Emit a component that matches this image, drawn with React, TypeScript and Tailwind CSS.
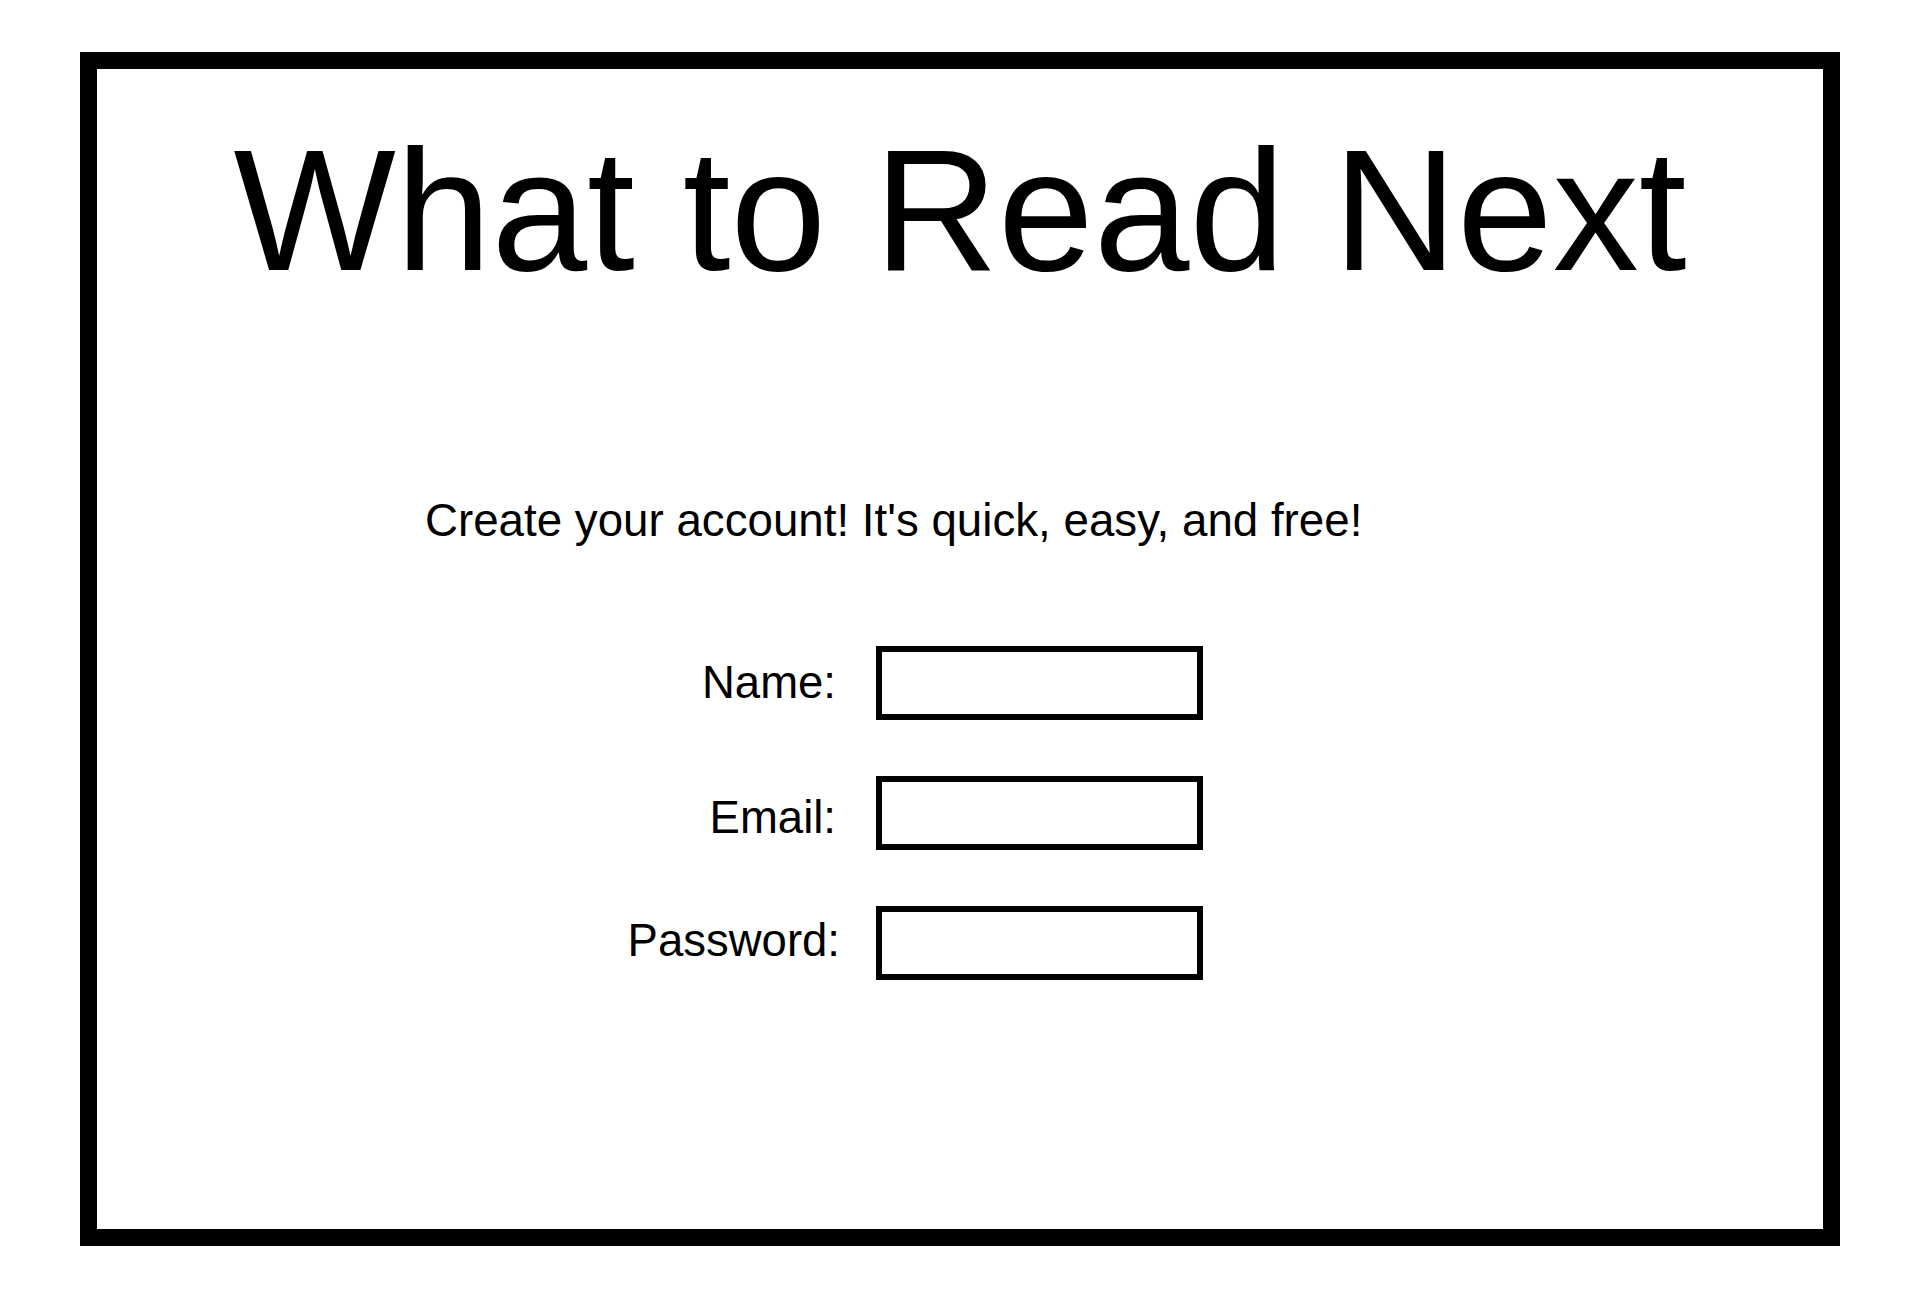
export default function App() {
  const fields = [
    { id: "name", label: "Name:", type: "text", labelClass: "mr-[4px]" },
    { id: "email", label: "Email:", type: "email", labelClass: "mr-[4px] mt-[10px]" },
    { id: "password", label: "Password:", type: "password", labelClass: "-mt-[3px]" },
  ]

  return (
    <div className="min-h-screen bg-white px-[80px] pt-[52px] font-['Liberation_Sans',Arial,sans-serif] text-black">
      <div className="flex h-[1194px] flex-col border-[17px] border-black">
        <h1 className="mt-[55px] text-center text-[172px] font-normal leading-none">What to Read Next</h1>

        <p className="mt-[202px] pl-[328px] text-[45.7px] leading-none">
          Create your account! It's quick, easy, and free!
        </p>

        <form className="mt-[102px] flex flex-col gap-[56px] pl-[489px]">
          {fields.map((f) => (
            <div key={f.id} className="flex items-center">
              <div className="flex w-[254px] justify-end">
                <label htmlFor={f.id} className={`text-[45.5px] leading-none ${f.labelClass}`}>
                  {f.label}
                </label>
              </div>
              <input
                id={f.id}
                type={f.type}
                className="ml-[36px] h-[74px] w-[327px] border-[6px] border-black bg-white px-2 text-[30px] outline-none"
              />
            </div>
          ))}
        </form>
      </div>
    </div>
  )
}
